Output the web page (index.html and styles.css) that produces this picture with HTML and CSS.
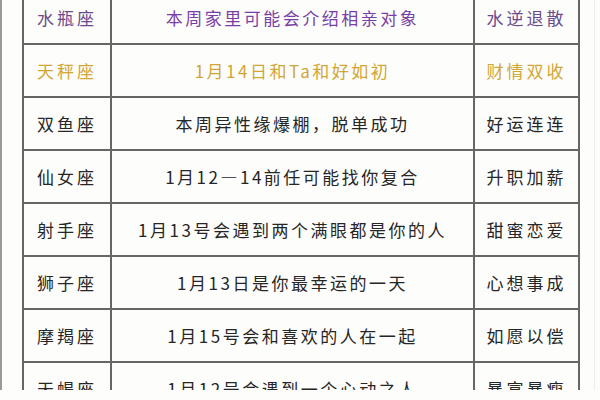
FILE: index.html
```html
<!DOCTYPE html>
<html lang="zh">
<head>
<meta charset="utf-8">
<link rel="stylesheet" href="styles.css">
</head>
<body>
<div class="page">
  <table class="tbl">
    <colgroup>
      <col class="c1"><col class="c2"><col class="c3">
    </colgroup>
    <tr class="purple"><td>水瓶座</td><td>本周家里可能会介绍相亲对象</td><td>水逆退散</td></tr>
    <tr class="gold"><td>天秤座</td><td>1月14日和Ta和好如初</td><td>财情双收</td></tr>
    <tr><td>双鱼座</td><td>本周异性缘爆棚，脱单成功</td><td>好运连连</td></tr>
    <tr><td>仙女座</td><td>1月12—14前任可能找你复合</td><td>升职加薪</td></tr>
    <tr><td>射手座</td><td>1月13号会遇到两个满眼都是你的人</td><td>甜蜜恋爱</td></tr>
    <tr><td>狮子座</td><td>1月13日是你最幸运的一天</td><td>心想事成</td></tr>
    <tr><td>摩羯座</td><td>1月15号会和喜欢的人在一起</td><td>如愿以偿</td></tr>
    <tr><td>天蝎座</td><td>1月12号会遇到一个心动之人</td><td>暴富暴瘦</td></tr>
  </table>
</div>
</body>
</html>
```

FILE: styles.css
```css
html, body {
  margin: 0;
  padding: 0;
  background: #fdfdfc;
  overflow: hidden;
}
.page {
  width: 600px;
  height: 400px;
  box-sizing: border-box;
  border-left: 2px solid #9a9a9a;
  padding-left: 20px;
  position: relative;
}
.page::after {
  content: "";
  position: absolute;
  top: 0;
  bottom: 0;
  left: 592px;
  width: 1px;
  background: #ececec;
}
.tbl {
  border-collapse: collapse;
  margin-top: -10px;
  width: 557px;
  table-layout: fixed;
  font-family: "Noto Sans CJK SC", "Noto Sans", sans-serif;
  font-size: 17px;
  color: #262626;
  letter-spacing: 3px;
}
.c1 { width: 88px; }
.c2 { width: 363px; }
.c3 { width: 105px; }
.tbl td {
  border: 2px solid #666;
  height: 51px;
  padding: 0;
  text-align: center;
  vertical-align: middle;
  white-space: nowrap;
  line-height: 20px;
}
.tbl td:nth-child(2) {
  letter-spacing: 2.5px;
}
.purple td { color: #6b4a8c; }
.purple td:nth-child(2) { color: #7a3fa6; }
.gold td { color: #d2a634; }
```
